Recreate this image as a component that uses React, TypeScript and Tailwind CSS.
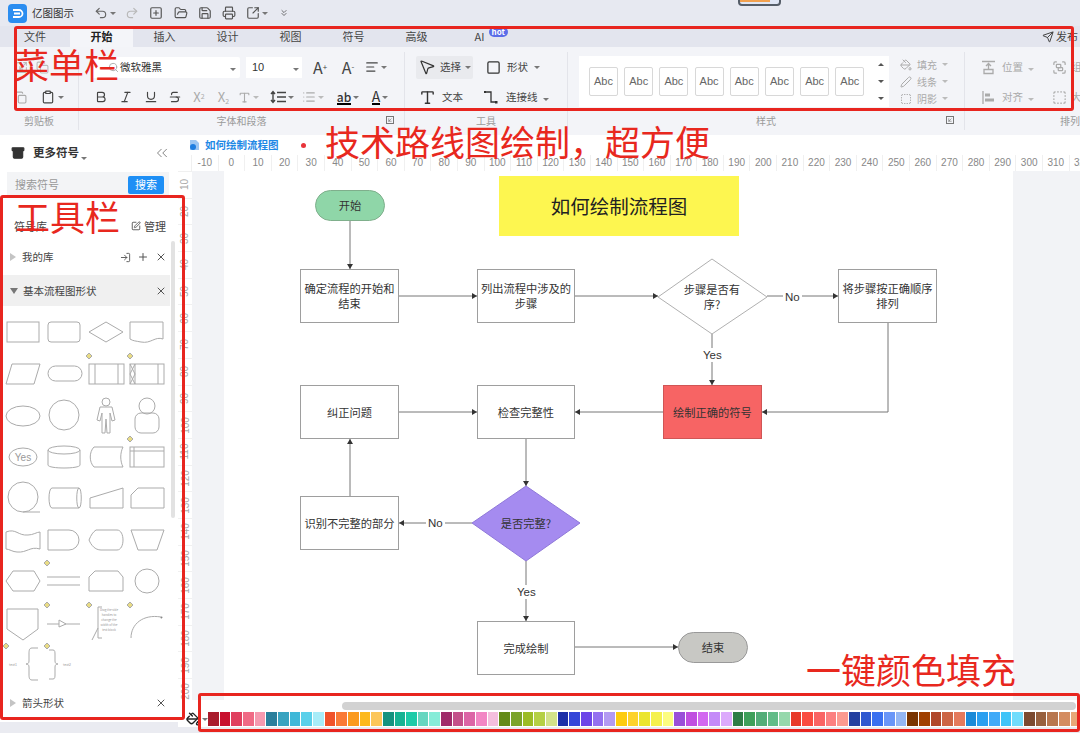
import React from "react";
import {
  Undo2, Redo2, SquarePlus, FolderOpen, Save, Printer, SquareArrowOutUpRight, ChevronsDown, Send, Search, Copy, Clipboard,
  Bold, Italic, Underline, Strikethrough, AlignLeft, MousePointer2, Square, Type, PaintBucket, Pen, SquareDashed,
  Group, ChevronsLeft, Archive, SquarePen, LogIn, Plus, X, List, Scaling, ArrowUpRight,
} from "lucide-react";

const Caret = ({ c = "border-t-[#777]" }: { c?: string }) => (
  <span className={`inline-block w-0 h-0 border-x-[3px] border-x-transparent border-t-[3px] ${c}`} />
);

const Tri = () => <span className="inline-block w-0 h-0 border-y-[4px] border-y-transparent border-l-[6px] border-l-[#c4c4c4]" />;

const tabs = ["开始", "插入", "设计", "视图", "符号", "高级"];

const TitleBar = () => (
  <div className="h-[26px] flex items-center bg-[#e7e9f1] relative">
    <div className="ml-[8px] w-[19px] h-[19px] rounded-[4px] bg-[#2b8df0] flex items-center justify-center">
      <svg width="13" height="13" viewBox="0 0 13 13"><path d="M2 3h6a3.5 3.5 0 0 1 0 7H2M3 6.5h6" stroke="#fff" strokeWidth="1.8" fill="none" /></svg>
    </div>
    <span className="ml-[5px] w-[62px] text-[10.5px] text-[#333]">亿图图示</span>
    <div className="w-[26px] flex items-center gap-[2px]"><Undo2 size={14} color="#666" /><Caret /></div>
    <div className="w-[24px] ml-[5px]"><Redo2 size={14} color="#b8b8b8" /></div>
    <div className="w-[25px]"><SquarePlus size={14} color="#555" /></div>
    <div className="w-[24px]"><FolderOpen size={14} color="#555" /></div>
    <div className="w-[24px]"><Save size={14} color="#555" /></div>
    <div className="w-[24px]"><Printer size={14} color="#555" /></div>
    <div className="w-[33px] flex items-center gap-[2px]"><SquareArrowOutUpRight size={14} color="#555" /><Caret /></div>
    <ChevronsDown size={10} color="#555" />
    <div className="absolute left-[738px] top-[-4px] w-[43px] h-[10px] border-2 border-[#555d68] rounded-[4px] bg-[#dfe6f5] overflow-hidden">
      <div className="w-[30px] h-[4px] bg-[#f2a14f]" />
    </div>
  </div>
);

const TabsRow = () => (
  <div className="h-[21px] flex items-center bg-[#e3e5ee] text-[11px] text-[#444] font-normal">
    <div className="w-[70px] text-center">文件</div>
    <div className="w-[63px] h-full flex items-center justify-center bg-[#f4f5f9] font-bold text-[#222] rounded-t-[3px]">开始</div>
    {tabs.slice(1).map((t) => <div key={t} className="w-[63px] text-center">{t}</div>)}
    <div className="w-[63px] flex justify-center relative">
      <span className="relative">AI<span className="absolute left-[14px] top-[-1px] h-[10px] px-[3px] rounded-[5px] bg-[#5b6de8] text-white text-[8px] leading-[10px] font-bold">hot</span></span>
    </div>
    <div className="ml-auto w-[38px] flex items-center gap-[2px] overflow-hidden whitespace-nowrap"><Send size={12} color="#444" /><span>发布</span></div>
  </div>
);

const Cell = ({ w, children, className = "" }: { w: string; children: React.ReactNode; className?: string }) => (
  <div className={`${w} flex items-center justify-center gap-[2px] ${className}`}>{children}</div>
);

const GroupLabel = ({ children }: { children: React.ReactNode }) => (
  <div className="h-[16px] mt-[1px] text-[10px] leading-[16px] text-[#9a9a9a] text-center relative">{children}</div>
);

const Launcher = () => (
  <span className="absolute right-[10px] top-[3px] w-[8px] h-[8px] border border-[#777]">
    <ArrowUpRight size={6} color="#555" className="rotate-180" />
  </span>
);

const Ribbon = () => (
  <div className="h-[88px] bg-[#f3f4f8] flex pt-[5px]">
    {/* clipboard */}
    <div className="w-[79px] border-r border-[#e3e4ea] flex flex-col mb-[5px]">
      <div className="h-[30px] flex items-center pl-[15px] gap-[8px]"><Scaling size={13} color="#bbb" /><Copy size={13} color="#bbb" /></div>
      <div className="h-[30px] flex items-center pl-[14px]">
        <Copy size={13} color="#aaa" />
        <div className="ml-[14px] flex items-center gap-[3px]"><Clipboard size={14} color="#444" /><Caret /></div>
      </div>
      <GroupLabel>剪贴板</GroupLabel>
    </div>
    {/* font */}
    <div className="w-[326px] border-r border-[#e3e4ea] flex flex-col mb-[5px]">
      <div className="h-[30px] flex items-center">
        <div className="ml-[12px] w-[149px] h-[21px] bg-white flex items-center pl-[17px] pr-[4px] text-[10.5px] text-[#333] rounded-[2px]">
          <Search size={11} color="#aaa" className="shrink-0" />
          <span className="ml-[1px]">微软雅黑</span>
          <span className="ml-auto"><Caret /></span>
        </div>
        <div className="ml-[6px] w-[56px] h-[21px] bg-white flex items-center pl-[6px] pr-[3px] text-[11px] text-[#333]" style={{ fontFamily: "'Liberation Sans',sans-serif" }}>
          10<span className="ml-auto"><Caret /></span>
        </div>
        <Cell w="w-[28px]" className="ml-[4px] text-[16px] text-[#444]"><span>A<sup className="text-[8px]">+</sup></span></Cell>
        <Cell w="w-[28px]" className="text-[16px] text-[#444]"><span>A<sup className="text-[8px]">-</sup></span></Cell>
        <Cell w="w-[28px]"><AlignLeft size={14} color="#444" /><Caret /></Cell>
      </div>
      <div className="h-[30px] flex items-center pl-[9px]">
        <Cell w="w-[25px]"><Bold size={14} color="#444" /></Cell>
        <Cell w="w-[25px]"><Italic size={14} color="#444" /></Cell>
        <Cell w="w-[25px]"><Underline size={14} color="#444" /></Cell>
        <Cell w="w-[24px]"><Strikethrough size={14} color="#444" /></Cell>
        <Cell w="w-[24px]" className="text-[13px] text-[#aaa]"><span>X<sup className="text-[7px]">2</sup></span></Cell>
        <Cell w="w-[25px]" className="text-[13px] text-[#aaa]"><span>X<sub className="text-[7px]">2</sub></span></Cell>
        <Cell w="w-[24px]"><Type size={13} color="#aaa" /><Caret c="border-t-[#bbb]" /></Cell>
        <Cell w="w-[34px]" className="ml-[5px]">
          <svg width="16" height="14" viewBox="0 0 16 14" fill="none" stroke="#444" strokeWidth="1.4"><path d="M3 2v10M1 4l2-2.5L5 4M1 10l2 2.5L5 10M7 2.5h9M7 7h9M7 11.5h9" /></svg>
          <Caret />
        </Cell>
        <Cell w="w-[28px]"><List size={14} color="#aaa" /><Caret c="border-t-[#bbb]" /></Cell>
        <Cell w="w-[36px]" className="ml-[3px]"><span className="text-[12px] text-[#333] leading-[13px] border-b-2 border-black font-medium">ab</span><Caret /></Cell>
        <Cell w="w-[28px]"><span className="text-[14px] text-[#333] leading-[14px] border-b-2 border-black">A</span><Caret /></Cell>
      </div>
      <GroupLabel>字体和段落<Launcher /></GroupLabel>
    </div>
    {/* tools */}
    <div className="w-[163px] border-r border-[#e3e4ea] flex flex-col mb-[5px] text-[10.5px] text-[#444]">
      <div className="h-[30px] flex items-center pl-[11px]">
        <div className="w-[57px] h-[23px] flex items-center bg-[#e9eaee] rounded-[2px] pl-[2px] gap-[4px]"><MousePointer2 size={18} color="#333" strokeWidth={1.6} /><span>选择</span><Caret /></div>
        <div className="ml-[13px] flex items-center gap-[6px]"><Square size={15} color="#333" /><span>形状</span><Caret /></div>
      </div>
      <div className="h-[30px] flex items-center pl-[14px]">
        <Type size={17} color="#333" />
        <span className="ml-[6px]">文本</span>
        <svg width="16" height="16" viewBox="0 0 16 16" className="ml-[20px]"><path d="M2 3h6v10h5" stroke="#333" strokeWidth="1.3" fill="none" /><rect x="1" y="2" width="2" height="2" fill="#333" /><rect x="12" y="12" width="2.5" height="2.5" fill="#333" /></svg>
        <span className="ml-[7px]">连接线</span>
        <span className="ml-[5px]"><Caret /></span>
      </div>
      <GroupLabel>工具</GroupLabel>
    </div>
    {/* styles */}
    <div className="w-[397px] border-r border-[#e3e4ea] flex flex-col mb-[5px]">
      <div className="h-[60px] flex">
        <div className="ml-[11px] mt-[4px] w-[310px] h-[51px] bg-white flex items-center pl-[10px] shrink-0">
          {[0, 1, 2, 3, 4, 5, 6, 7].map((i) => (
            <div key={i} className="w-[29px] h-[29px] mr-[6.2px] border border-[#d8d8d8] rounded-[2px] flex items-center justify-center text-[11px] text-[#666] shrink-0" style={{ fontFamily: "'Liberation Sans',sans-serif" }}>Abc</div>
          ))}
          <div className="ml-[7px] h-full flex flex-col items-center justify-between py-[7px] text-[#555]">
            <span className="w-0 h-0 border-x-[3px] border-x-transparent border-b-[3px] border-b-[#555]" />
            <Caret c="border-t-[#555]" />
            <Caret c="border-t-[#555]" />
          </div>
        </div>
        <div className="ml-[11px] mt-[4px] flex flex-col text-[10px] text-[#aaa] leading-[17px]">
          <div className="flex items-center gap-[5px]"><PaintBucket size={12} color="#aaa" /><span>填充</span><Caret c="border-t-[#bbb]" /></div>
          <div className="flex items-center gap-[5px]"><Pen size={12} color="#aaa" /><span>线条</span><Caret c="border-t-[#bbb]" /></div>
          <div className="flex items-center gap-[5px]"><SquareDashed size={12} color="#aaa" /><span>阴影</span><Caret c="border-t-[#bbb]" /></div>
        </div>
      </div>
      <GroupLabel><span>样式</span><Launcher /></GroupLabel>
    </div>
    {/* arrange */}
    <div className="flex-1 flex flex-col mb-[5px] text-[10.5px] text-[#aaa] overflow-hidden">
      <div className="h-[30px] flex items-center pl-[16px] whitespace-nowrap">
        <svg width="15" height="15" viewBox="0 0 15 15" fill="none" stroke="#aaa" strokeWidth="1.3" className="shrink-0"><path d="M1 1.5h13M7.5 4v5M5 6l2.5-2.5L10 6M3 9.5h9v4H3z" /></svg>
        <span className="ml-[6px]">位置</span><span className="ml-[5px]"><Caret c="border-t-[#bbb]" /></span>
        <span className="ml-[18px]"><Group size={15} color="#aaa" /></span><span className="ml-[4px]">组合</span>
      </div>
      <div className="h-[30px] flex items-center pl-[16px] whitespace-nowrap">
        <svg width="15" height="15" viewBox="0 0 15 15" className="shrink-0"><path d="M2 1v13" stroke="#aaa" strokeWidth="1.3" /><rect x="4" y="3.5" width="5" height="3" fill="#aaa" /><rect x="4" y="8.5" width="9" height="3" fill="#aaa" /></svg>
        <span className="ml-[6px]">对齐</span><span className="ml-[5px]"><Caret c="border-t-[#bbb]" /></span>
        <span className="ml-[18px]"><SquareDashed size={15} color="#aaa" /></span><span className="ml-[4px]">大小</span>
      </div>
      <GroupLabel><span className="ml-[95px] block text-left whitespace-nowrap">排列</span></GroupLabel>
    </div>
  </div>
);

const S = "#ababab";
const Mk = () => <polygon points="4,0 7,3 4,6 1,3" fill="#e9dc85" />;
const Sv = ({ children, mk }: { children?: React.ReactNode; mk?: boolean }) => (
  <svg width="42" height="42" viewBox="0 0 42 42" fill="none" stroke={S} strokeWidth="1" className="overflow-visible">
    {mk && <Mk />}
    {children}
  </svg>
);

const shapes: React.ReactNode[] = [
  <Sv><rect x="5" y="11" width="32" height="20" /></Sv>,
  <Sv><rect x="5" y="11" width="32" height="20" rx="3" /></Sv>,
  <Sv><polygon points="4,21 21,11 38,21 21,31" /></Sv>,
  <Sv><path d="M4 11h33v17c-8-3-12 5-22 3-5-1-8-1-11-3z" /></Sv>,
  <Sv><polygon points="10,11 38,11 32,31 4,31" /></Sv>,
  <Sv><rect x="5" y="13" width="34" height="15" rx="7.5" /></Sv>,
  <Sv mk><rect x="4" y="11" width="35" height="20" /><path d="M10 11v20M33 11v20" /></Sv>,
  <Sv mk><rect x="4" y="11" width="34" height="20" /><path d="M9 11v20M32 11v20M4 11l5 10-5 10M9 11l-5 10 5 10" /></Sv>,
  <Sv><ellipse cx="21" cy="22" rx="17" ry="10" /></Sv>,
  <Sv><circle cx="21" cy="21" r="15" /></Sv>,
  <Sv><circle cx="21" cy="8" r="4" /><path d="M15 13h12l3 13-3 1-2-8v20h-3l-1-14-1 14h-3V19l-2 8-3-1z" /></Sv>,
  <Sv><circle cx="21" cy="12" r="8" /><rect x="9" y="19" width="24" height="20" rx="6" /></Sv>,
  <Sv><ellipse cx="21" cy="21" rx="14" ry="9" /><text x="21" y="25" textAnchor="middle" fontSize="10" fill="#999" stroke="none" fontFamily="Liberation Sans">Yes</text></Sv>,
  <Sv><path d="M5 14v15c0 4 32 4 32 0V14" /><ellipse cx="21" cy="14" rx="16" ry="4" /></Sv>,
  <Sv><path d="M9 11h29c-3 6-3 14 0 20H9c-5-5-5-15 0-20z" /></Sv>,
  <Sv mk><rect x="4" y="11" width="34" height="20" /><path d="M4 15h34M8 11v20" /></Sv>,
  <Sv><circle cx="21" cy="20" r="15" /><path d="M21 35h17" /></Sv>,
  <Sv><path d="M9 11h27c3 0 3 20 0 20H9c-4 0-4-20 0-20z" /><path d="M36 11c-3 0-3 20 0 20" /></Sv>,
  <Sv><polygon points="5,21 38,11 38,31 5,31" /></Sv>,
  <Sv><polygon points="12,11 38,11 38,31 5,31 5,18" /></Sv>,
  <Sv><path d="M4 13c10-4 12 4 22 3 5 0 9-3 12-3v17c-10-3-13 4-23 3-4 0-8-3-11-3z" /></Sv>,
  <Sv><path d="M5 11h21a10 10 0 0 1 0 20H5z" /></Sv>,
  <Sv><path d="M11 11h21c8 0 8 20 0 20H16c-6 0-10-5-12-10 2-5 4-8 7-10z" /></Sv>,
  <Sv><polygon points="5,11 38,11 31,31 12,31" /></Sv>,
  <Sv><polygon points="4,21 11,11 32,11 38,21 32,31 11,31" /></Sv>,
  <Sv mk><path d="M4 17h33M4 25h33" /></Sv>,
  <Sv><path d="M10 11h23l5 6v14H4V17z" /></Sv>,
  <Sv><circle cx="21" cy="21" r="12" /></Sv>,
  <Sv><polygon points="5,7 36,7 36,27 21,38 5,27" /></Sv>,
  <Sv mk><path d="M4 22h33" /><polygon points="16,18 23,22 16,25" fill="#fff" /></Sv>,
  <Sv mk>
    <path d="M7 38l6-12M17 5h-4v31h4" />
    <text x="24" y="9" textAnchor="middle" fontSize="3" fill="#999" stroke="none">Drag the side</text>
    <text x="24" y="14" textAnchor="middle" fontSize="3" fill="#999" stroke="none">handles to</text>
    <text x="24" y="19" textAnchor="middle" fontSize="3" fill="#999" stroke="none">change the</text>
    <text x="24" y="24" textAnchor="middle" fontSize="3" fill="#999" stroke="none">width of the</text>
    <text x="24" y="29" textAnchor="middle" fontSize="3" fill="#999" stroke="none">text block</text>
  </Sv>,
  <Sv mk><path d="M5 36c0-14 12-24 30-21" /><path d="M35 15l1 1" stroke="#888" strokeWidth="2" /></Sv>,
  <Sv mk>
    <text x="11" y="23" textAnchor="middle" fontSize="3.5" fill="#999" stroke="none">text1</text>
    <path d="M36 5h-6c-3 0-3 3-3 6v7c0 2-1 3-3 3 2 0 3 1 3 3v7c0 3 0 6 3 6h6" />
  </Sv>,
  <Sv mk>
    <path d="M6 7h4c2 0 2 2 2 5v6c0 2 1 3 3 3-2 0-3 1-3 3v7c0 3 0 5-2 5H6" />
    <text x="24" y="23" textAnchor="middle" fontSize="3.5" fill="#999" stroke="none">text2</text>
  </Sv>,
];

const Left = () => (
  <div className="w-[178px] shrink-0 flex flex-col bg-white relative">
    <div className="h-[34px] flex items-center pl-[11px] pt-[2px]">
      <Archive size={14} color="#333" fill="#333" />
      <span className="ml-[8px] text-[11.5px] font-bold text-[#333]">更多符号</span>
      <span className="ml-[2px]"><Caret /></span>
      <ChevronsLeft size={18} color="#777" className="ml-auto mr-[7px]" strokeWidth={1.2} />
    </div>
    <div className="mx-[7px] mr-[9px] h-[25px] mt-[3px] bg-[#f3f4f6] flex items-center pl-[8px] pr-[5px] text-[11px] text-[#999]">
      <span>搜索符号</span>
      <span className="ml-auto w-[36px] h-[18px] bg-[#1e8ff5] text-white rounded-[2px] flex items-center justify-center">搜索</span>
    </div>
    <div className="h-[32px] mt-[13px] flex items-center pl-[14px] pr-[12px] text-[11px] text-[#444]">
      <span>符号库</span>
      <span className="ml-auto flex items-center gap-[3px]"><SquarePen size={10} color="#444" />管理</span>
    </div>
    <div className="h-[30px] flex items-center pl-[10px] pr-[3px] mr-[8px] text-[10.5px] text-[#444]">
      <Tri /><span className="ml-[6px]">我的库</span>
      <span className="ml-auto flex items-center gap-[6px]"><LogIn size={11} color="#555" /><Plus size={12} color="#555" /><X size={12} color="#555" /></span>
    </div>
    <div className="h-[31px] ml-[3px] mr-[8px] mt-[3px] bg-[#f0f0f0] flex items-center pl-[7px] pr-[3px] text-[10.5px] text-[#444]">
      <span className="w-0 h-0 border-x-[4px] border-x-transparent border-t-[6px] border-t-[#777]" />
      <span className="ml-[5px]">基本流程图形状</span>
      <X size={12} color="#555" className="ml-auto" />
    </div>
    <div className="grid grid-cols-[repeat(4,41.3px)] auto-rows-[41.5px] pl-[2px] mt-[5px] h-[382px]">
      {shapes.map((s, i) => <div key={i}>{s}</div>)}
    </div>
    <div className="h-[20px] flex items-center pl-[10px] pr-[3px] mr-[8px] text-[10.5px] text-[#444]">
      <Tri /><span className="ml-[6px]">箭头形状</span>
      <X size={12} color="#555" className="ml-auto" />
    </div>
    <div className="absolute left-[171px] top-[106px] w-[4px] h-[277px] bg-[#e2e2e2] rounded-[2px]" />
    <div className="mt-auto h-[11px] bg-[#eaebf1]" />
  </div>
);

const hr = Array.from({ length: 34 }, (_, i) => (i - 1) * 10);
const vr = Array.from({ length: 20 }, (_, i) => (i + 1) * 10);

const Node = ({ cls, children }: { cls: string; children: React.ReactNode }) => (
  <div className={`absolute flex items-center justify-center text-center text-[11.25px] leading-[15px] text-[#333] ${cls}`}>
    <span>{children}</span>
  </div>
);
const box = "border border-[#9e9e9e] bg-white";
const Lbl = ({ cls, children }: { cls: string; children: React.ReactNode }) => (
  <div className={`absolute bg-white px-[2px] text-[11.5px] leading-[14px] text-[#333] ${cls}`} style={{ fontFamily: "'Liberation Sans',sans-serif" }}>{children}</div>
);

const Diagram = () => (
  <div className="ml-[32px] w-[789px] h-full bg-white relative shrink-0 overflow-hidden">
    <svg width="789" height="529" viewBox="224 171 789 529" className="absolute inset-0" fill="none" stroke="#777" strokeWidth="1">
      <defs>
        <marker id="ah" markerWidth="5" markerHeight="6" refX="5" refY="3" orient="auto" markerUnits="userSpaceOnUse">
          <path d="M0 0L5 3L0 6z" fill="#333" stroke="none" />
        </marker>
      </defs>
      <path d="M350 221V269" markerEnd="url(#ah)" />
      <path d="M399 296H477" markerEnd="url(#ah)" />
      <path d="M575 296H658" markerEnd="url(#ah)" />
      <path d="M767 296H838" markerEnd="url(#ah)" />
      <path d="M712 334V385" markerEnd="url(#ah)" />
      <path d="M888 323V412H762" markerEnd="url(#ah)" />
      <path d="M663 412H575" markerEnd="url(#ah)" />
      <path d="M399 412H477" markerEnd="url(#ah)" />
      <path d="M526 439V486" markerEnd="url(#ah)" />
      <path d="M472 523H399" markerEnd="url(#ah)" />
      <path d="M350 496V439" markerEnd="url(#ah)" />
      <path d="M526 561V621" markerEnd="url(#ah)" />
      <path d="M575 647H678" markerEnd="url(#ah)" />
      <polygon points="658,297 712,259 767,297 712,334" fill="#fff" stroke="#b0b0b0" />
      <polygon points="472,523 526,486 580,523 526,561" fill="#a58bf0" stroke="#8f78d8" />
    </svg>
    <Node cls="left-[91px] top-[19px] w-[70px] h-[31px] rounded-[15.5px] bg-[#8fd6a8] border border-[#7faf8c]">开始</Node>
    <div className="absolute left-[275px] top-[5px] w-[240px] h-[60px] bg-[#fdf650] flex items-center justify-center text-[19.5px] text-[#222]">如何绘制流程图</div>
    <Node cls={`left-[76px] top-[98px] w-[99px] h-[54px] ${box}`}>确定流程的开始和<br />结束</Node>
    <Node cls={`left-[253px] top-[98px] w-[98px] h-[54px] ${box}`}>列出流程中涉及的<br />步骤</Node>
    <Node cls="left-[445px] top-[111px] w-[86px] h-[30px]">步骤是否有<br />序?</Node>
    <Node cls={`left-[614px] top-[98px] w-[99px] h-[54px] ${box}`}>将步骤按正确顺序<br />排列</Node>
    <Node cls="left-[439px] top-[214px] w-[99px] h-[54px] bg-[#f76464] border border-[#d05555]">绘制正确的符号</Node>
    <Node cls={`left-[253px] top-[214px] w-[98px] h-[54px] ${box}`}>检查完整性</Node>
    <Node cls={`left-[76px] top-[214px] w-[99px] h-[54px] ${box}`}>纠正问题</Node>
    <Node cls={`left-[76px] top-[325px] w-[99px] h-[54px] ${box}`}>识别不完整的部分</Node>
    <Node cls="left-[262px] top-[344px] w-[80px] h-[16px]">是否完整?</Node>
    <Node cls={`left-[253px] top-[450px] w-[98px] h-[54px] ${box}`}>完成绘制</Node>
    <Node cls="left-[454px] top-[461px] w-[70px] h-[31px] rounded-[15.5px] bg-[#c8c8c4] border border-[#999]">结束</Node>
    <Lbl cls="left-[559px] top-[119px]">No</Lbl>
    <Lbl cls="left-[477px] top-[177px]">Yes</Lbl>
    <Lbl cls="left-[202px] top-[345px]">No</Lbl>
    <Lbl cls="left-[291px] top-[414px]">Yes</Lbl>
  </div>
);

const swatches = [
  "#a91b2c", "#c8102e", "#e0405f", "#f06a85", "#f59ab0",
  "#2a7f9c", "#38a3c0", "#3fb8d8", "#5ad0ea", "#a8ecf8",
  "#f0522a", "#fa7a36", "#fb9a1e", "#fdb91e", "#fcc65a",
  "#15937f", "#17b393", "#1dcba8", "#66d6c0", "#86ecd8",
  "#a02b6a", "#c4508a", "#dc65a6", "#f286c4", "#f4bedd",
  "#648a18", "#7ba32a", "#9cbc26", "#b5d045", "#d3e28a",
  "#1c2ea8", "#3445d8", "#6d45e8", "#9470f0", "#b39af2",
  "#fdcc0e", "#fdd22a", "#ebe52e", "#f5f14e", "#fcfc80",
  "#9a4fd8", "#c04fe0", "#d268f0", "#c48af8", "#dcaafc",
  "#2e7d46", "#3ea05a", "#52ad78", "#62bc88", "#96d8ac",
  "#e83a2a", "#fa4c40", "#fa6464", "#fc8080", "#fc9a90",
  "#2440a0", "#2f58d0", "#3a70f0", "#6a96f8", "#94b6f4",
  "#7a3400", "#a04000", "#b0472a", "#cc6444", "#e47a5c",
  "#1a8ad8", "#2a9ff0", "#40aaf8", "#40c4f8", "#70dcfc",
  "#7c4a30", "#98603e", "#b8764e", "#d48c60", "#e8a878",
];

const Right = () => (
  <div className="flex-1 min-w-0 flex flex-col bg-white">
    <div className="h-[20px] flex items-center pl-[11px]">
      <svg width="11" height="12" viewBox="0 0 11 12"><path d="M1 1h6l3 3v7H1z" fill="#9cc6f2" /><circle cx="4" cy="8" r="3" fill="#1e7ee0" /></svg>
      <span className="ml-[5px] text-[10.5px] font-bold text-[#1e88e5]">如何绘制流程图</span>
      <span className="ml-[22px] w-[5px] h-[5px] rounded-full bg-[#e8343a]" />
    </div>
    <div className="h-[16px] flex pl-[13px] overflow-hidden text-[10px] text-[#888]" style={{ fontFamily: "'Liberation Sans',sans-serif" }}>
      {hr.map((n) => <div key={n} className="w-[26.6px] shrink-0 text-center leading-[16px] border-l border-[#f0f0f0]">{n}</div>)}
    </div>
    <div className="h-[529px] flex">
      <div className="w-[14px] shrink-0 overflow-hidden text-[10px] text-[#aaa]" style={{ fontFamily: "'Liberation Sans',sans-serif" }}>
        {vr.map((n) => (
          <div key={n} className="h-[26.7px] flex items-center justify-center border-t border-[#f0f0f0]"><span className="-rotate-90">{n}</span></div>
        ))}
      </div>
      <div className="flex-1 bg-[#f2f3f6] overflow-hidden"><Diagram /></div>
    </div>
    <div className="h-[33px] flex flex-col">
      <div className="ml-[164px] mt-[2px] h-[8px] w-[734px] rounded-[4px] bg-[#d2d2d2]" />
      <div className="mt-[2px] h-[14px] flex items-center">
        <div className="w-[30px] shrink-0 flex items-center pl-[8px] gap-[2px]"><PaintBucket size={14} color="#222" strokeWidth={2.4} /><Caret /></div>
        {swatches.map((c) => <div key={c} className="w-[10.67px] h-full mr-px shrink-0" style={{ backgroundColor: c }} />)}
      </div>
      <div className="flex-1 mt-px bg-[#eaebf1]" />
    </div>
  </div>
);

const Redbox = ({ cls }: { cls: string }) => <div className={`absolute border-[3px] border-[#e8251f] rounded-[3px] ${cls}`} />;
const RedText = ({ cls, children }: { cls: string; children: React.ReactNode }) => (
  <div className={`absolute text-[#e8281e] whitespace-nowrap leading-none ${cls}`}>{children}</div>
);

export default function App() {
  return (
    <div className="w-[1080px] h-[733px] relative overflow-hidden flex flex-col bg-white" style={{ fontFamily: "'Noto Sans CJK SC','Liberation Sans',sans-serif" }}>
      <TitleBar />
      <TabsRow />
      <Ribbon />
      <div className="h-[598px] flex">
        <Left />
        <Right />
      </div>
      <Redbox cls="left-[14px] top-[26px] w-[1060px] h-[85px]" />
      <Redbox cls="left-0 top-[195px] w-[185px] h-[525px]" />
      <Redbox cls="left-[198px] top-[693px] w-[882px] h-[39px]" />
      <RedText cls="left-[14px] top-[46px] text-[35px]">菜单栏</RedText>
      <RedText cls="left-[325px] top-[123px] text-[35px]">技术路线图绘制，超方便</RedText>
      <RedText cls="left-[15px] top-[198px] text-[35px]">工具栏</RedText>
      <RedText cls="left-[806px] top-[651px] text-[35px]">一键颜色填充</RedText>
    </div>
  );
}
